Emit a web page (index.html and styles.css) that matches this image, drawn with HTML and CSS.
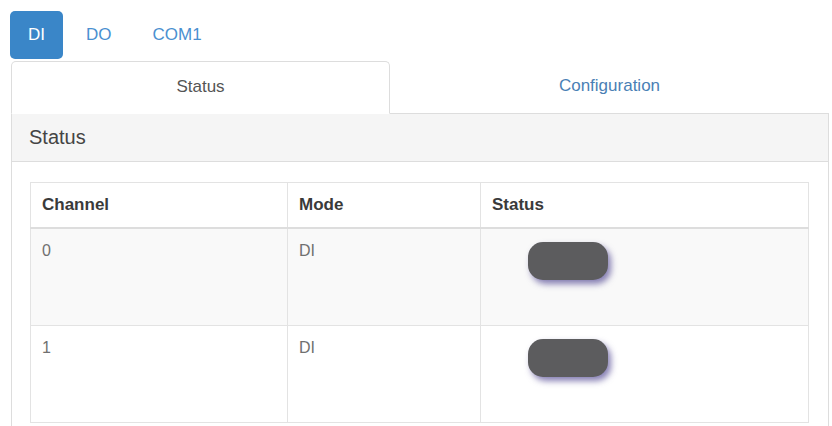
FILE: index.html
```html
<!DOCTYPE html>
<html lang="en">
<head>
    <meta charset="UTF-8">
    <meta name="viewport" content="width=device-width, initial-scale=1.0">
    <title>IO Status</title>
    <link rel="stylesheet" href="styles.css">
</head>
<body>
    <div class="page">
        <ul class="pills">
            <li class="pill active">DI</li>
            <li class="pill">DO</li>
            <li class="pill">COM1</li>
        </ul>

        <ul class="tabs">
            <li class="tab active">Status</li>
            <li class="tab">Configuration</li>
        </ul>

        <div class="panel">
            <div class="panel-heading">Status</div>
            <div class="panel-body">
                <table class="io-table">
                    <thead>
                        <tr>
                            <th class="col-channel">Channel</th>
                            <th class="col-mode">Mode</th>
                            <th>Status</th>
                        </tr>
                    </thead>
                    <tbody>
                        <tr class="odd">
                            <td>0</td>
                            <td>DI</td>
                            <td><span class="toggle"></span></td>
                        </tr>
                        <tr>
                            <td>1</td>
                            <td>DI</td>
                            <td><span class="toggle"></span></td>
                        </tr>
                    </tbody>
                </table>
            </div>
        </div>
    </div>
</body>
</html>
```

FILE: styles.css
```css
body {
    font-family: "Liberation Sans", Arial, sans-serif;
    font-size: 17px;
    color: #333333;
    background-color: #ffffff;
    margin: 0;
    padding: 0;
}

.page {
    padding: 11px 3px 0 10px;
}

ul {
    list-style: none;
    margin: 0;
    padding: 0;
}

.pills {
    display: flex;
}

.pill {
    padding: 12px 18px;
    line-height: 24px;
    color: #4a90d0;
    border-radius: 5px;
    margin-left: 5px;
}

.pill:first-child {
    margin-left: 0;
}

.pill.active {
    background-color: #3a86c8;
    color: #ffffff;
}

.tabs {
    display: grid;
    grid-template-columns: 379px 1fr;
    margin-top: 2px;
    margin-left: 1px;
}

.tab {
    text-align: center;
    padding: 13px 0 14px;
    line-height: 24px;
    color: #4a7fb5;
    border-bottom: 1px solid #dddddd;
    font-size: 17px;
}

.tab.active {
    color: #555555;
    border: 1px solid #dddddd;
    border-bottom-color: transparent;
    border-radius: 5px 5px 0 0;
}

.panel {
    margin-left: 1px;
    border: 1px solid #dddddd;
    border-top: none;
    border-radius: 0 0 5px 5px;
}

.panel-heading {
    background-color: #f5f5f5;
    border-bottom: 1px solid #dddddd;
    padding: 12px 17px;
    line-height: 23px;
    font-size: 20px;
    color: #444444;
}

.panel-body {
    padding: 20px 19px 18px 18px;
}

.io-table {
    width: 100%;
    border-collapse: collapse;
}

.io-table th,
.io-table td {
    border: 1px solid #e3e3e3;
    padding: 10px 11px;
    line-height: 24px;
    text-align: left;
    vertical-align: top;
}

.io-table th {
    border-bottom: 2px solid #dddddd;
    font-weight: bold;
    color: #3a3a3a;
}

.io-table td {
    color: #707070;
    font-size: 16px;
}

.col-channel {
    width: 234px;
}

.col-mode {
    width: 170px;
}

.io-table tr.odd td {
    background-color: #f9f9f9;
}

.toggle {
    display: block;
    width: 80px;
    height: 38px;
    margin: 3px 0 35px 36px;
    background-color: #5c5c5e;
    border-radius: 15px;
    box-shadow: 3px 4px 6px rgba(70, 60, 140, 0.65);
}
```
